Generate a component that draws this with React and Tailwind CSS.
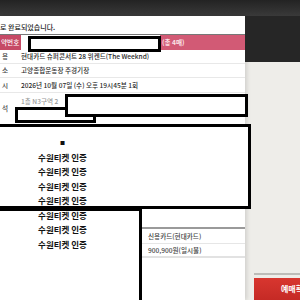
import React from "react";

const FONT = { fontFamily: '"Noto Sans CJK KR", "Noto Sans", sans-serif' };

// ── Booking summary rows ───────────────────────────────────────────────────
const ROWS = [
  { label: "용", value: "현대카드 슈퍼콘서트 28 위켄드(The Weeknd)", h: "h-[14px]" },
  { label: "소", value: "고양종합운동장 주경기장", h: "h-[14px]" },
  { label: "시", value: "2026년 10월 07일 (수) 오후 19시45분 1회", h: "h-[15px]" },
];

function InfoRow({ label, value, h }) {
  return (
    <div className={`flex items-center border-b border-[#e8e8e8] ${h}`}>
      <span className="w-[21px] pl-[2px] text-[#444]">{label}</span>
      <span className="text-[#2a2a2a] whitespace-nowrap">{value}</span>
    </div>
  );
}

export default function App() {
  return (
    <div className="relative w-[300px] h-[300px] overflow-hidden bg-[#eeede9]" style={FONT}>
      {/* top bar */}
      <div className="h-[16px] bg-gradient-to-b from-[#232323] to-[#3a3a3a]" />

      <div className="flex h-[284px]">
        {/* dialog panel */}
        <div className="w-[253px] bg-white shadow-[2px_0_4px_rgba(0,0,0,0.12)] text-[6.6px] leading-none font-medium">
          <p className="pt-[6px] h-[16px] leading-[10px] text-[7px] text-[#1a1a1a] whitespace-nowrap">
            로 완료되었습니다.
          </p>
          <div className="mt-[2px] w-[245px] border-t border-[#777]">
            <div className="flex h-[15px] bg-[#d25a75]">
              <div className="w-[21px] bg-[#c64a66] text-white flex items-center pl-[1px]">약번호</div>
              <div className="w-[139px] bg-white" />
              <div className="flex items-center pl-[2px] font-bold text-[#fbe3e8]">(총 4매)</div>
            </div>
            {ROWS.map((r) => (
              <InfoRow key={r.label} {...r} />
            ))}
            <div className="flex items-center h-[31px]">
              <span className="w-[21px] pl-[2px] text-[#444]">석</span>
              <div className="flex flex-col gap-[7px] text-[#999]">
                <span>1층 N3구역 2</span>
                <span>&nbsp;</span>
              </div>
            </div>
          </div>

          {/* payment summary */}
          <div className="mt-[103px] ml-[140px] w-[105px] border-t-2 border-[#9a9a9a] text-[#444]">
            <div className="h-[15px] flex items-center pl-[8px] border-b border-[#e6e6e6]">신용카드(현대카드)</div>
            <div className="h-[14px] flex items-center pl-[8px] border-b-2 border-[#e2e2e2]">900,900원(일시불)</div>
          </div>
        </div>

        {/* right side */}
        <div className="flex-1 flex flex-col">
          <div className="h-[46px] bg-[#262626]" />
          <div className="flex-1" />
          <div className="ml-[9px] h-[2px] bg-[#bdbcb8]" />
          <div className="ml-[9px] mt-[3px] h-[22px] bg-gradient-to-b from-[#d8362f] to-[#c52a25] flex items-center pl-[27px] text-white text-[8px] font-bold whitespace-nowrap overflow-hidden">
            예매확인
          </div>
        </div>
      </div>

      {/* redaction boxes */}
      <div className="absolute left-[28px] top-[36px] w-[133px] h-[16px] bg-white border-[3px] border-black" />
      <div className="absolute left-[15px] top-[107px] w-[81px] h-[16px] bg-white border-[3px] border-black" />
      <div className="absolute left-[65px] top-[94px] w-[183px] h-[23px] bg-white border-[3px] border-black" />
      <div className="absolute left-[-3px] top-[124px] w-[254px] h-[85px] bg-white border-[3px] border-black" />
      <div className="absolute left-[-3px] top-[208px] w-[145px] h-[100px] bg-white border-[3px] border-black" />

      {/* overlay text */}
      <div className="absolute left-0 top-[135px] w-[125px] flex flex-col items-center text-[8.5px] leading-[14.5px] font-bold text-[#111]">
        <span className="text-[5px]">■</span>
        {Array.from({ length: 7 }).map((_, i) => (
          <span key={i}>수원티켓 인증</span>
        ))}
      </div>
    </div>
  );
}
